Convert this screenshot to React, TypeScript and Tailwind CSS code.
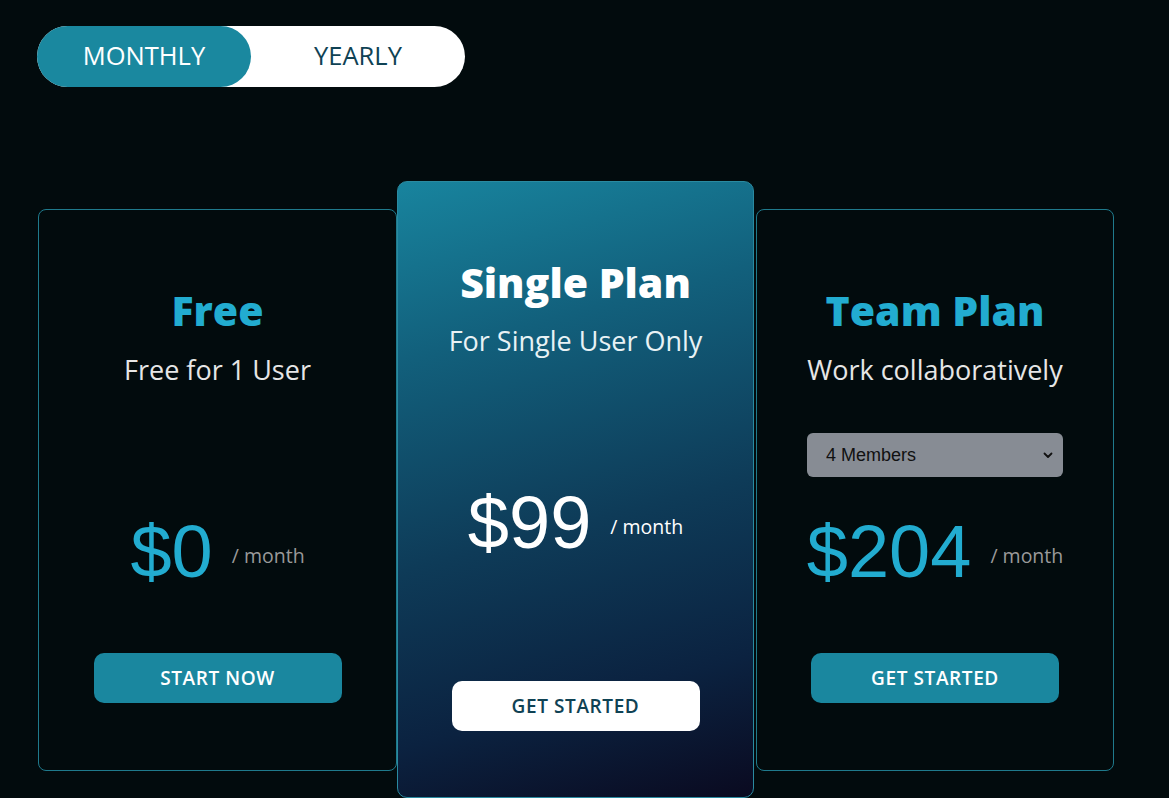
import React from "react";

const sans = "font-['Open_Sans','Noto_Sans',sans-serif]";
const priceFont = "font-['Liberation_Sans',Arial,sans-serif]";

function Chevron() {
  return (
    <svg width="12" height="12" viewBox="0 0 12 12" fill="none">
      <path d="M2.5 4.5 6 8l3.5-3.5" stroke="#111" strokeWidth="1.8" strokeLinecap="round" strokeLinejoin="round" />
    </svg>
  );
}

function Price({ amount, highlight }: { amount: string; highlight?: boolean }) {
  return (
    <div className="flex items-center justify-center h-[80px]">
      <span className={`${priceFont} text-[74px] leading-[80px] ${highlight ? "text-white" : "text-[#22acd0]"}`}>{amount}</span>
      <span className={`${sans} ml-[19px] mt-[8px] text-[19.5px] ${highlight ? "text-white" : "text-[#9a9a9a]"}`}>/ month</span>
    </div>
  );
}

export default function App() {
  return (
    <div className={`min-h-screen bg-[#020b0d] pl-[37px] pt-[26px] ${sans}`}>
      <div className="flex w-[428px] h-[61px] rounded-full bg-white">
        <button className="w-[214px] h-full rounded-full bg-[#1a889f] text-white text-[25.5px] pb-[2px]">MONTHLY</button>
        <button className="flex-1 h-full text-[#0f4254] text-[25.5px] pb-[2px]">YEARLY</button>
      </div>

      <div className="mt-[94px] flex items-start pl-[1px]">
        {/* Free */}
        <div className="mt-[28px] w-[359px] h-[562px] rounded-[8px] border border-[#1f7a8c] flex flex-col items-center pt-[76px]">
          <h2 className="text-[41px] leading-[48px] font-extrabold text-[#22acd0]">Free</h2>
          <p className="mt-[18px] text-[27px] leading-[36px] text-[#e6e6e6]">Free for 1 User</p>
          <div className="h-[124px]" />
          <Price amount="$0" />
          <button className="mt-[61px] w-[248px] h-[50px] rounded-[10px] bg-[#1a879f] text-white text-[19px] tracking-[0.6px] font-semibold">START NOW</button>
        </div>

        {/* Single */}
        <div className="w-[357px] h-[617px] rounded-[10px] border border-[#2a8aa0] bg-[linear-gradient(165deg,#18849e_0%,#12607c_25%,#0e3b58_55%,#0b2240_80%,#0a0a20_100%)] flex flex-col items-center pt-[76px]">
          <h2 className="text-[41px] leading-[48px] font-extrabold text-white">Single Plan</h2>
          <p className="mt-[17px] text-[27px] leading-[36px] text-[#e8f2f5]">For Single User Only</p>
          <div className="h-[124px]" />
          <Price amount="$99" highlight />
          <button className="mt-[118px] w-[248px] h-[50px] rounded-[10px] bg-white text-[#0f4254] text-[19px] tracking-[0.6px] font-semibold">GET STARTED</button>
        </div>

        {/* Team */}
        <div className="mt-[28px] ml-[2px] w-[358px] h-[562px] rounded-[8px] border border-[#1f7a8c] flex flex-col items-center pt-[76px]">
          <h2 className="text-[41px] leading-[48px] font-extrabold text-[#22acd0]">Team Plan</h2>
          <p className="mt-[18px] text-[27px] leading-[36px] text-[#e6e6e6]">Work collaboratively</p>
          <div className="relative mt-[45px] w-[256px] h-[44px]">
            <select
              defaultValue="4"
              className="w-full h-full appearance-none rounded-[6px] bg-[#878c94] pl-[19px] text-[18px] text-[#111] font-['Liberation_Sans',Arial,sans-serif] outline-none"
            >
              <option value="1">1 Member</option>
              <option value="2">2 Members</option>
              <option value="3">3 Members</option>
              <option value="4">4 Members</option>
            </select>
            <span className="pointer-events-none absolute right-[9px] top-[16px]">
              <Chevron />
            </span>
          </div>
          <div className="h-[35px]" />
          <Price amount="$204" />
          <button className="mt-[61px] w-[248px] h-[50px] rounded-[10px] bg-[#1a879f] text-white text-[19px] tracking-[0.6px] font-semibold">GET STARTED</button>
        </div>
      </div>
    </div>
  );
}
